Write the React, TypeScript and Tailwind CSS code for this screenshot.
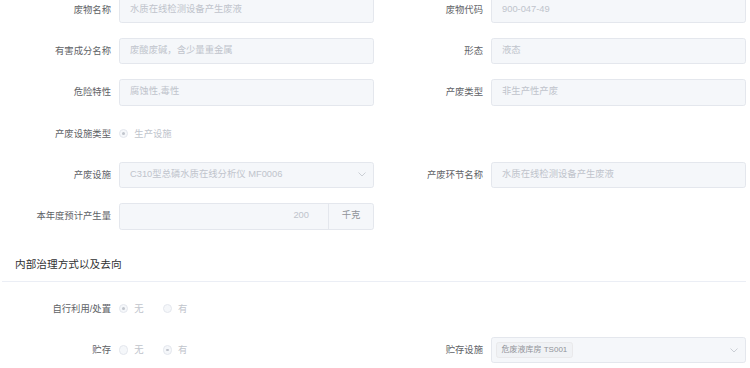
import React from "react";

const FONT = { fontFamily: '"Liberation Sans", "Noto Sans CJK SC", sans-serif' };

function Label({ text }: { text: string }) {
  return (
    <div className="w-[119px] shrink-0 pr-[8px] text-right text-[9.33px] leading-[12px] text-[#606266] whitespace-nowrap">
      {text}
    </div>
  );
}

function Row({ label, children }: { label?: string; children?: React.ReactNode }) {
  if (!label) return <div className="h-[26.67px]" />;
  return (
    <div className="flex h-[26.67px] items-center">
      <Label text={label} />
      {children}
    </div>
  );
}

function Input({ value }: { value: string }) {
  return (
    <div className="flex h-[26.67px] w-[255px] shrink-0 items-center rounded-[2.67px] border border-[#e4e7ed] bg-[#f5f7fa] px-[10px] text-[9.33px] text-[#c0c4cc] whitespace-nowrap">
      {value}
    </div>
  );
}

function Chevron() {
  return (
    <svg width="8" height="5" viewBox="0 0 8 5" className="shrink-0">
      <path d="M0.5 0.5 L4 4 L7.5 0.5" fill="none" stroke="#c0c4cc" strokeWidth="0.8" />
    </svg>
  );
}

function Select({ value }: { value: string }) {
  return (
    <div className="flex h-[26.67px] w-[255px] shrink-0 items-center justify-between rounded-[2.67px] border border-[#e4e7ed] bg-[#f5f7fa] pl-[10px] pr-[7px] text-[9.33px] text-[#c0c4cc] whitespace-nowrap">
      <span>{value}</span>
      <Chevron />
    </div>
  );
}

function TagSelect({ tag }: { tag: string }) {
  return (
    <div className="flex h-[26.67px] w-[255px] shrink-0 items-center justify-between rounded-[2.67px] border border-[#e4e7ed] bg-[#f5f7fa] pl-[3.5px] pr-[7px] whitespace-nowrap">
      <span className="flex h-[16px] items-center rounded-[2.67px] border border-[#e9e9eb] bg-[#f0f2f5] px-[5px] text-[8px] text-[#909399]">
        {tag}
      </span>
      <Chevron />
    </div>
  );
}

function NumberInput({ value, unit }: { value: string; unit: string }) {
  return (
    <div className="flex h-[26.67px] w-[255px] shrink-0 rounded-[2.67px] border border-[#e4e7ed] bg-[#f5f7fa] text-[9.33px] whitespace-nowrap">
      <div className="flex flex-1 items-center justify-end pr-[19px] text-[#c0c4cc]">{value}</div>
      <div className="flex w-[45px] items-center justify-center border-l border-[#e4e7ed] text-[#909399]">{unit}</div>
    </div>
  );
}

function Radio({ checked, label }: { checked: boolean; label: string }) {
  return (
    <div className="mr-[19px] flex shrink-0 items-center">
      <span className="flex h-[9.33px] w-[9.33px] items-center justify-center rounded-full border border-[#e4e7ed] bg-[#f5f7fa]">
        {checked && <span className="h-[2.67px] w-[2.67px] rounded-full bg-[#c0c4cc]" />}
      </span>
      <span className="pl-[6px] text-[9.33px] leading-[12px] text-[#c0c4cc]">{label}</span>
    </div>
  );
}

export default function App() {
  return (
    <div className="h-[368px] w-[750px] overflow-hidden bg-white" style={FONT}>
      <div className="mt-[-3.7px] grid grid-cols-[372px_378px] gap-y-[14.67px]">
        <Row label="废物名称"><Input value="水质在线检测设备产生废液" /></Row>
        <Row label="废物代码"><Input value="900-047-49" /></Row>
        <Row label="有害成分名称"><Input value="废酸废碱，含少量重金属" /></Row>
        <Row label="形态"><Input value="液态" /></Row>
        <Row label="危险特性"><Input value="腐蚀性,毒性" /></Row>
        <Row label="产废类型"><Input value="非生产性产废" /></Row>
        <Row label="产废设施类型">
          <Radio checked label="生产设施" />
        </Row>
        <Row />
        <Row label="产废设施"><Select value="C310型总磷水质在线分析仪 MF0006" /></Row>
        <Row label="产废环节名称"><Input value="水质在线检测设备产生废液" /></Row>
        <Row label="本年度预计产生量"><NumberInput value="200" unit="千克" /></Row>
        <Row />
      </div>
      <div className="mx-[2px] flex h-[52.6px] w-[744px] items-end border-b border-[#ebeef5] pb-[9px] pl-[13px]">
        <span className="text-[10.67px] leading-[16px] text-[#303133]">内部治理方式以及去向</span>
      </div>
      <div className="grid grid-cols-[372px_378px] gap-y-[14.67px] pt-[13.3px]">
        <Row label="自行利用/处置">
          <Radio checked label="无" />
          <Radio checked={false} label="有" />
        </Row>
        <Row />
        <Row label="贮存">
          <Radio checked={false} label="无" />
          <Radio checked label="有" />
        </Row>
        <Row label="贮存设施"><TagSelect tag="危废液库房 TS001" /></Row>
      </div>
    </div>
  );
}
